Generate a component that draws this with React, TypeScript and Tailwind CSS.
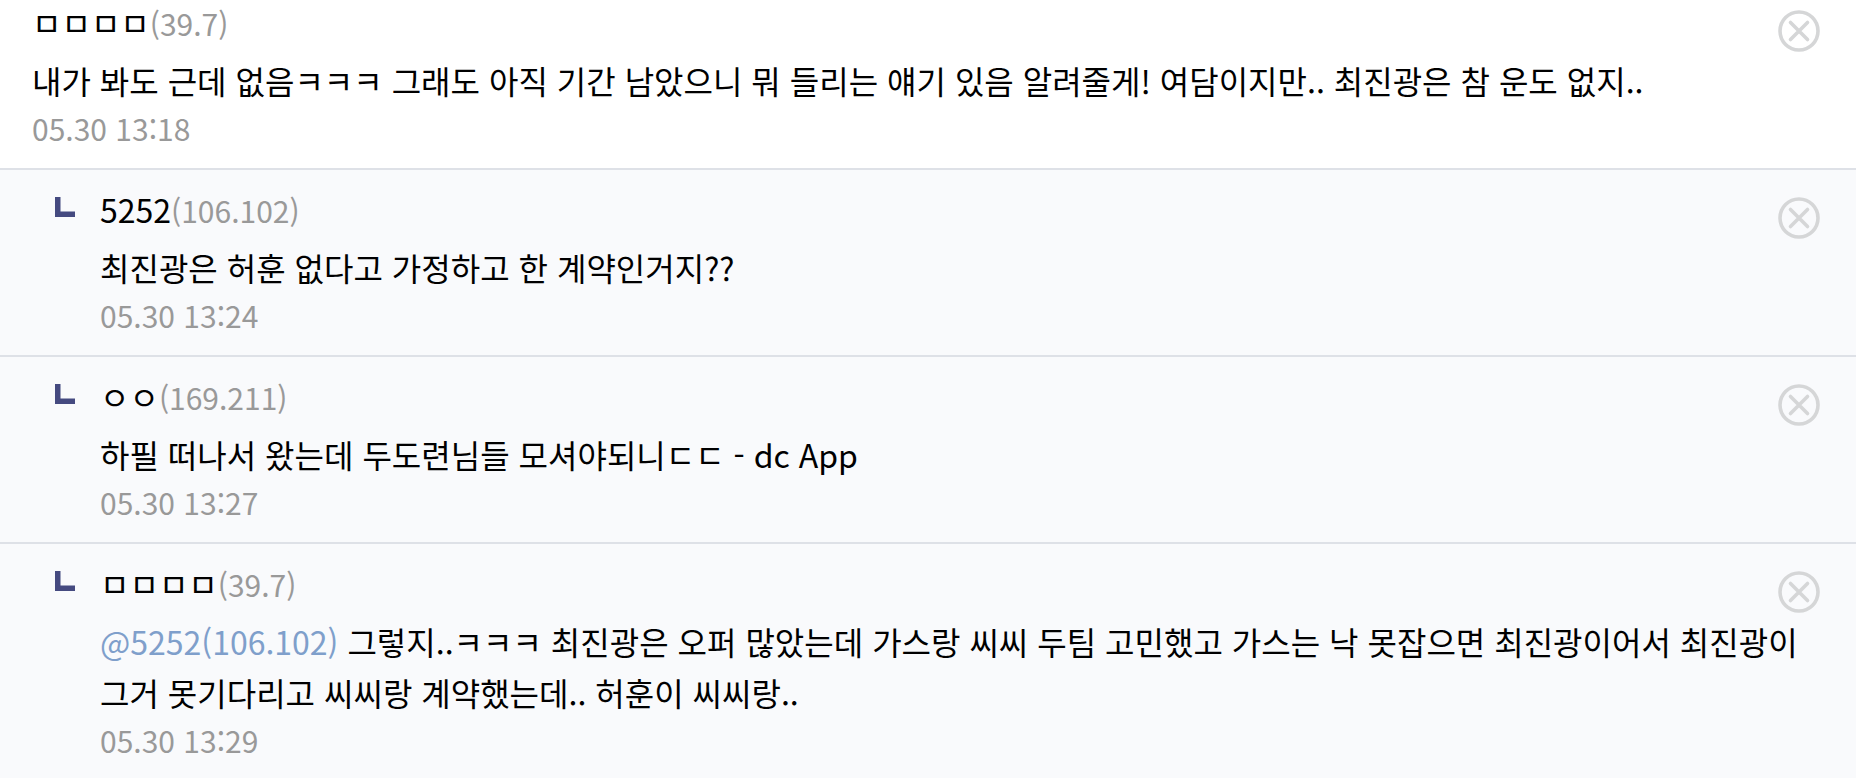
type Comment = {
  id: number;
  name: string;
  ip: string;
  text: string;
  date: string;
  reply?: boolean;
  mention?: string;
};

const comments: Comment[] = [
  {
    id: 1,
    name: 'ㅁㅁㅁㅁ',
    ip: '39.7',
    text: '내가 봐도 근데 없음ㅋㅋㅋ 그래도 아직 기간 남았으니 뭐 들리는 얘기 있음 알려줄게! 여담이지만.. 최진광은 참 운도 없지..',
    date: '05.30 13:18',
  },
  {
    id: 2,
    name: '5252',
    ip: '106.102',
    text: '최진광은 허훈 없다고 가정하고 한 계약인거지??',
    date: '05.30 13:24',
    reply: true,
  },
  {
    id: 3,
    name: 'ㅇㅇ',
    ip: '169.211',
    text: '하필 떠나서 왔는데 두도련님들 모셔야되니ㄷㄷ - dc App',
    date: '05.30 13:27',
    reply: true,
  },
  {
    id: 4,
    name: 'ㅁㅁㅁㅁ',
    ip: '39.7',
    mention: '@5252(106.102)',
    text: '그렇지..ㅋㅋㅋ 최진광은 오퍼 많았는데 가스랑 씨씨 두팀 고민했고 가스는 낙 못잡으면 최진광이어서 최진광이 그거 못기다리고 씨씨랑 계약했는데.. 허훈이 씨씨랑..',
    date: '05.30 13:29',
    reply: true,
  },
];

function ReplyMark() {
  return (
    <svg className="mt-[10px] h-5 w-5 shrink-0" viewBox="0 0 20 20" fill="#454a80" aria-hidden="true">
      <path d="M0 0h5.5v14.5H20V20H0z" />
    </svg>
  );
}

function DeleteButton() {
  return (
    <button type="button" aria-label="삭제" className="mt-[10px] h-[42px] w-[42px] shrink-0 cursor-pointer">
      <svg viewBox="0 0 42 42" fill="none" stroke="#d5d6d7" strokeWidth="3.6" strokeLinecap="round">
        <circle cx="21" cy="21" r="19" />
        <path d="M12.5 12.5l17 17M29.5 12.5l-17 17" />
      </svg>
    </button>
  );
}

function CommentItem({ comment }: { comment: Comment }) {
  return (
    <li
      className={
        comment.reply
          ? 'flex gap-[25px] border-t-2 border-[#dee1e7] bg-[#f9fafc] pt-[17px] pr-9 pb-[18px] pl-[55px] last:pb-4'
          : 'flex bg-white pr-9 pb-[18px] pl-8'
      }
    >
      {comment.reply && <ReplyMark />}
      <div className="min-w-0 flex-1">
        <div className="flex h-[55px] items-start justify-between">
          <p className="text-[32px] leading-[44px]">
            {comment.name}
            <span className="text-[30px] leading-[44px] text-[#999999]">({comment.ip})</span>
          </p>
          <DeleteButton />
        </div>
        <p className="text-[32px] leading-[51px] break-keep">
          {comment.mention && (
            <>
              <a href="#" className="text-[#7f9fcb]">{comment.mention}</a>{' '}
            </>
          )}
          {comment.text}
        </p>
        <time className="block text-[30px] leading-[44px] text-[#999999]">{comment.date}</time>
      </div>
    </li>
  );
}

export default function App() {
  return (
    <ul className="font-['Noto_Sans_CJK_KR',sans-serif] text-black" lang="ko">
      {comments.map((comment) => (
        <CommentItem key={comment.id} comment={comment} />
      ))}
    </ul>
  );
}
